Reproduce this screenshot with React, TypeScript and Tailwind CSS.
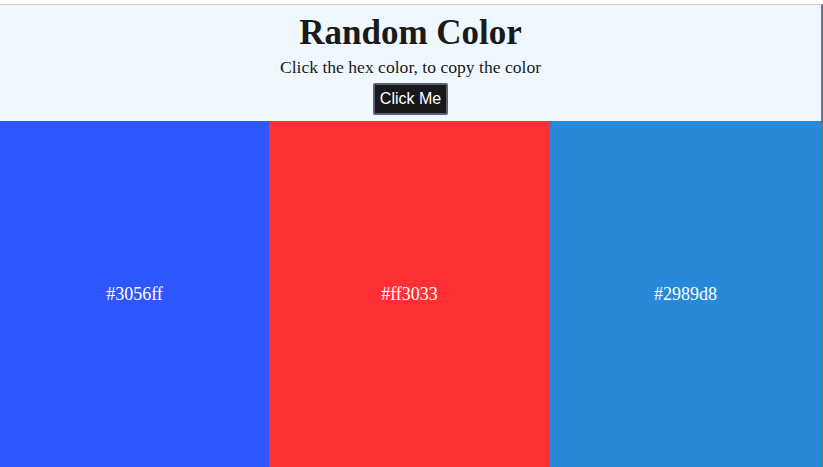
import React from "react";

const colors = [
  { hex: "#3056ff", w: "w-[269px]" },
  { hex: "#ff3033", w: "w-[281px]" },
  { hex: "#2989d8", w: "flex-1" },
];

export default function App() {
  return (
    <div className="w-[823px] h-[467px] overflow-hidden bg-[#f0f8ff] flex flex-col" style={{ fontFamily: '"Liberation Serif", "Times New Roman", serif' }}>
      <div className="h-[4px] bg-white" />
      <div className="flex-1 flex flex-col border-t border-t-[#c8ccd8] border-r-2 border-r-[#6b7385]">
        <div className="h-[116px] flex flex-col items-center">
          <h1 className="mt-[7px] text-[35px] leading-[42px] font-bold text-[#1a1a1a]">Random Color</h1>
          <p className="text-[17.6px] leading-[22px] text-[#1a1a1a] mt-[2px]">Click the hex color, to copy the color</p>
          <button className="mt-[5px] h-[32px] px-[5px] bg-[#18181b] text-white text-[16px] border-2 border-[#5b6170] rounded-[2px]" style={{ fontFamily: '"Liberation Sans", Arial, sans-serif' }}>
            Click Me
          </button>
        </div>
        <div className="flex-1 flex">
          {colors.map((c) => (
            <div key={c.hex} className={`${c.w} h-full flex items-center justify-center text-white text-[18px]`} style={{ backgroundColor: c.hex }}>
              {c.hex}
            </div>
          ))}
        </div>
      </div>
    </div>
  );
}
